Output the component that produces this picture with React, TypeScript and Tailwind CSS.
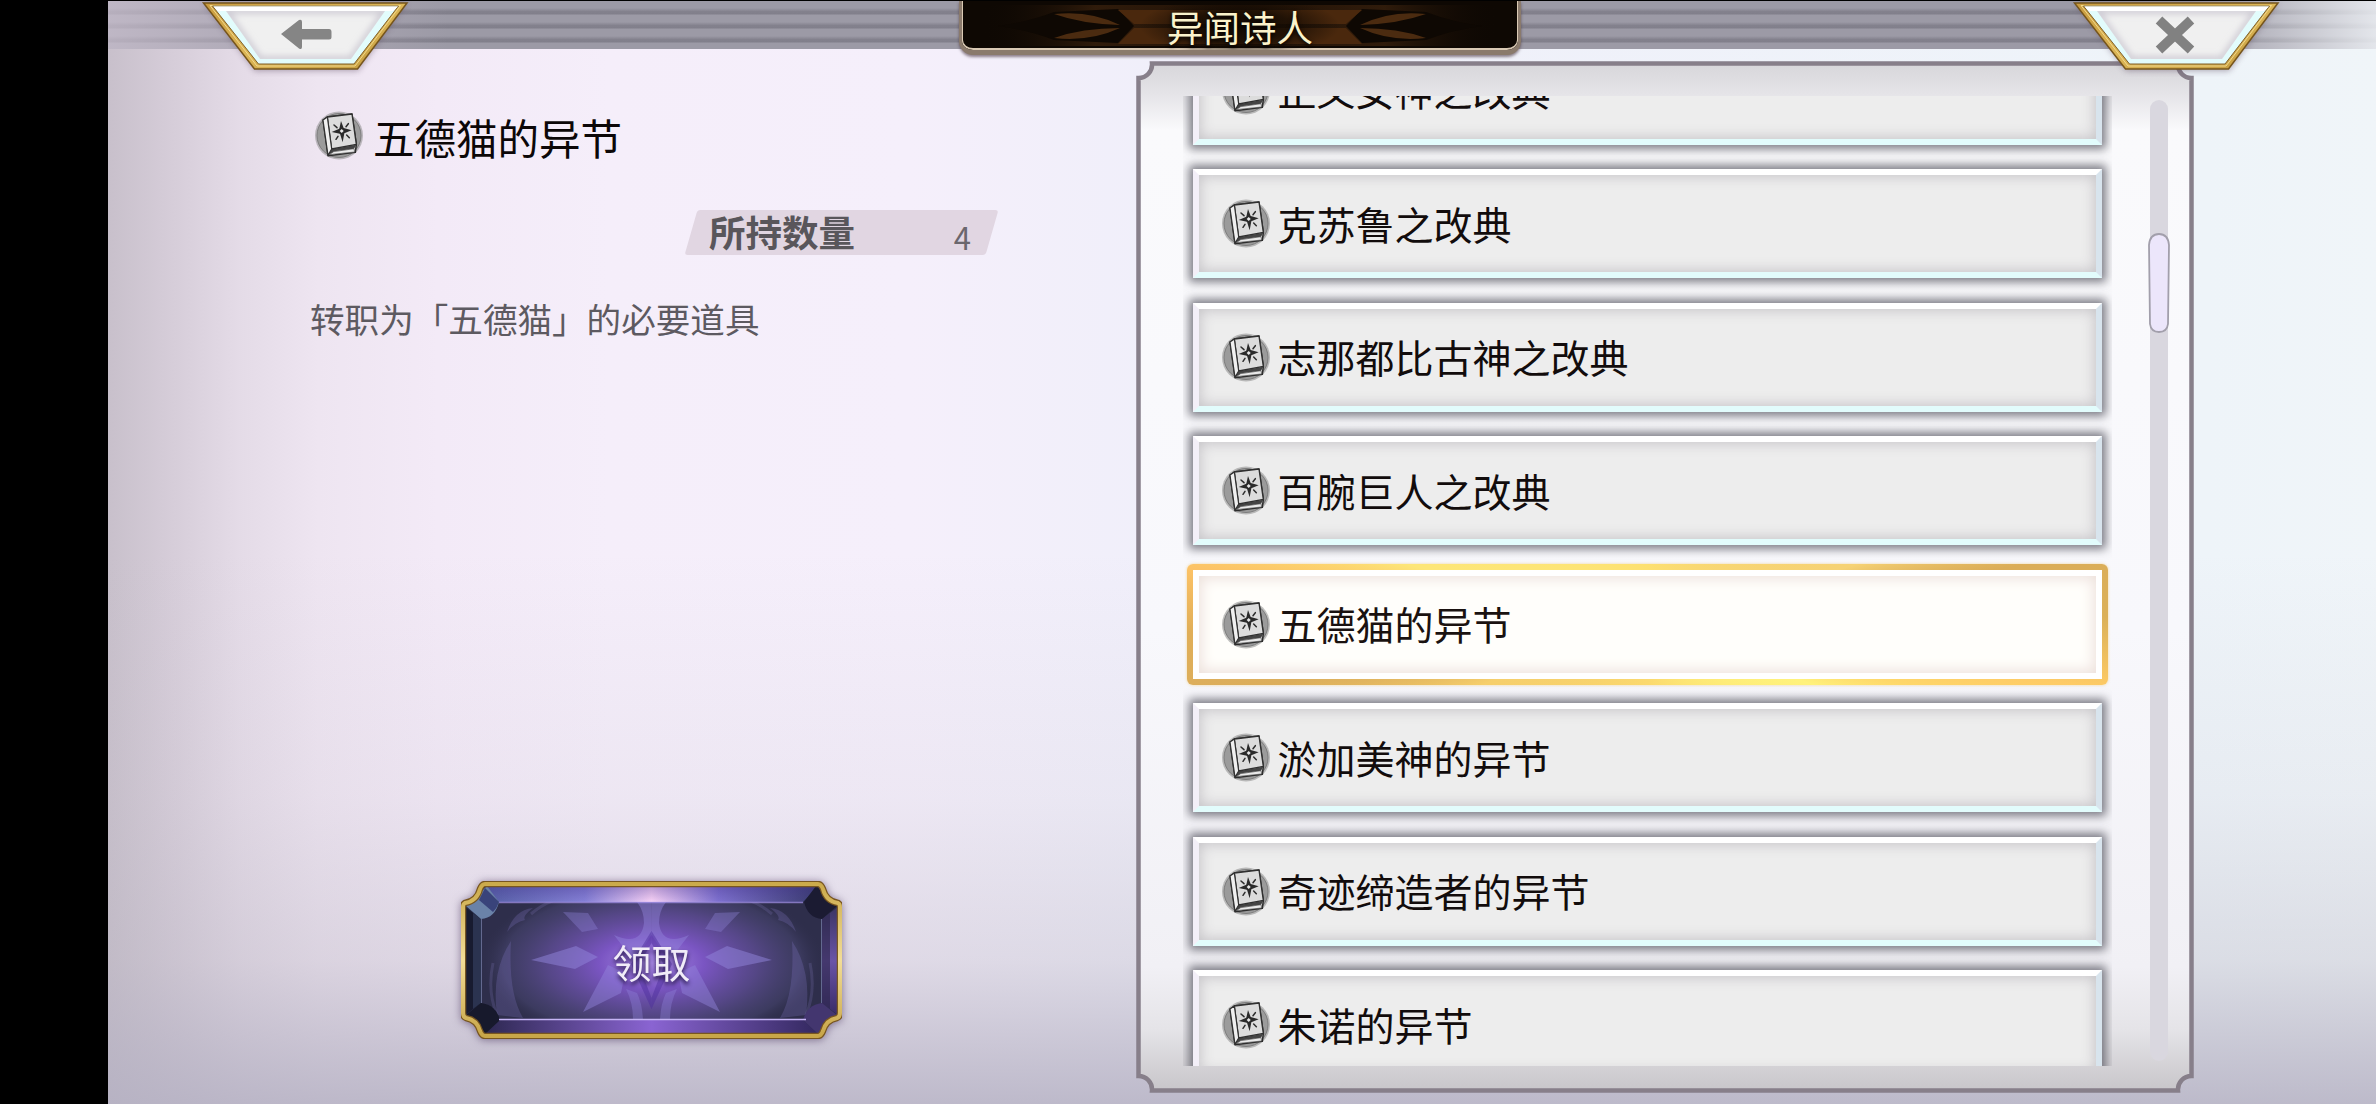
import React from 'react';

interface Item {
  id: number;
  name: string;
}

const ITEMS: Item[] = [
  { id: 1, name: '正义女神之改典' },
  { id: 2, name: '克苏鲁之改典' },
  { id: 3, name: '志那都比古神之改典' },
  { id: 4, name: '百腕巨人之改典' },
  { id: 5, name: '五德猫的异节' },
  { id: 6, name: '淤加美神的异节' },
  { id: 7, name: '奇迹缔造者的异节' },
  { id: 8, name: '朱诺的异节' },
];

const SELECTED_ID = 5;

const BookIcon: React.FC = () => (
  <svg viewBox="0 0 144 147" className="h-[49px] w-12 shrink-0">
    <circle cx="72" cy="73.500" r="72" fill="#8d8d8d" opacity="0.55" />
    <circle cx="72" cy="73.500" r="66" fill="#9b9b9b" stroke="#7d7d7d" strokeWidth="3" />
    {/* spine and pages */}
    <path d="M24 27 L37 18 L111 9 L124 100 L121 124 L39 134 Z" fill="#e6e6e6" stroke="#2c2c2c" strokeWidth="4.500" strokeLinejoin="round" />
    <path d="M39 133 L50 115 L124 101 L117 113 L58 121 Z" fill="#444" />
    <path d="M43 131 L56 122 L117 113 L119 123 Z" fill="#e9e9e9" stroke="#444" strokeWidth="2" />
    {/* cover */}
    <path d="M37 18 L111 9 L124 100 L50 114 Z" fill="#dcdcdc" stroke="#303030" strokeWidth="4" strokeLinejoin="round" />
    <path d="M24 27 L37 18 L50 114 L39 133 Z" fill="#f0f0f0" stroke="#303030" strokeWidth="3.500" strokeLinejoin="round" />
    {/* star */}
    <path d="M78 30 L86 51 L110 58 L88 67 L83 94 L75 68 L50 63 L73 53 Z" fill="#2a2a2a" />
    <circle cx="80" cy="60" r="9" fill="#2a2a2a" />
    <path d="M80 54 L86 60 L80 66 L74 60 Z" fill="#e8e8e8" />
    <path d="M57 42 L66 50 M100 38 L93 47 M63 85 L69 76 M103 80 L95 72" stroke="#2d2d2d" strokeWidth="4.500" strokeLinecap="round" />
  </svg>
);

const CornerButton: React.FC<{ id: string; label: string; children: React.ReactNode }> = ({ id, label, children }) => (
  <button aria-label={label} className="h-[76px] w-[216px] shrink-0">
    <svg viewBox="0 0 216 76" className="block h-full w-full">
      <defs>
        <linearGradient id={`${id}-gold`} x1="0" y1="0" x2="1" y2="1">
          <stop offset="0" stopColor="#c99b3e" />
          <stop offset="0.500" stopColor="#dcb656" />
          <stop offset="1" stopColor="#c39a3c" />
        </linearGradient>
        <filter id={`${id}-blur`} x="-20%" y="-20%" width="140%" height="140%">
          <feGaussianBlur stdDeviation="3" />
        </filter>
        <clipPath id={`${id}-face`}>
          <path d="M28 10 H187 L153 58 H62 Z" />
        </clipPath>
      </defs>
      <path d="M6 2 H209 L160 70 H57 Z" fill="#5c4a60" opacity="0.450" filter={`url(#${id}-blur)`} />
      <path d="M5.500 2 H209 L159.500 68 H56.500 Z" fill={`url(#${id}-gold)`} stroke="#76551c" strokeWidth="1.500" />
      <path d="M12 4.500 H202.500 L157 65 H59 Z" fill="none" stroke="#f1d98c" strokeWidth="1" />
      <path d="M14.500 5 H200.500 L156 63 H60.500 Z" fill="#e2fcfc" stroke="#80602a" strokeWidth="1" />
      <path d="M15.500 5.500 H200 L195 10 H20 Z" fill="#fff" />
      <path d="M28 10 H187 L153 58 H62 Z" fill="#f0f0f0" />
      <g clipPath={`url(#${id}-face)`}>
        <path d="M28 10 H187 L153 58 H62 Z" fill="none" stroke="#c9c6d0" strokeWidth="5" filter={`url(#${id}-blur)`} />
      </g>
      {children}
    </svg>
  </button>
);

const TitlePlate: React.FC = () => (
  <div className="grid h-[54px] w-[562px] shrink-0 place-items-center overflow-hidden rounded-b-[14px] border-x-[3px] border-b-[5px] border-[#8a7a6c] bg-[#0e0803] shadow-[0_2px_3px_rgba(70,50,60,0.6),inset_0_-1px_0_1px_#d9c9b4]">
    <svg viewBox="0 0 556 49" preserveAspectRatio="none" className="col-start-1 row-start-1 h-full w-full">
      <defs>
        <linearGradient id="plate" x1="0" x2="1" y1="0" y2="0">
          <stop offset="0" stopColor="#0e0803" stopOpacity="0" />
          <stop offset="0.220" stopColor="#42260f" />
          <stop offset="0.500" stopColor="#2b1708" />
          <stop offset="0.780" stopColor="#42260f" />
          <stop offset="1" stopColor="#0e0803" stopOpacity="0" />
        </linearGradient>
        <radialGradient id="plateCore">
          <stop offset="0" stopColor="#120a03" />
          <stop offset="0.500" stopColor="#120a03" stopOpacity="0.750" />
          <stop offset="1" stopColor="#120a03" stopOpacity="0" />
        </radialGradient>
      </defs>
      <rect x="20" y="4" width="516" height="41" fill="url(#plate)" opacity="0.650" />
      {['', 'translate(556 0) scale(-1 1)'].map((t) => (
        <g key={t} transform={t}>
          <path d="M36 25 Q66 21 92 11 L156 8 L172 25 L156 42 L92 39 Q66 29 36 25 Z" fill="#0e0803" />
          <path d="M92 13 Q128 9 158 24 Q120 23 92 13 Z M92 37 Q128 41 158 27 Q120 27 92 37 Z" fill="#4b2b10" />
          <path d="M156 9 H278 V23 H172 Z M172 27 H278 V43 H156 Z" fill="#4a280d" />
        </g>
      ))}
      <ellipse cx="278" cy="25" rx="100" ry="30" fill="url(#plateCore)" />
    </svg>
    <h1 className="col-start-1 row-start-1 pt-0.5 text-[36.500px] leading-[44px] text-[#fbf3cb] [text-shadow:0_2px_4px_#000]">异闻诗人</h1>
  </div>
);

const ReceiveButton: React.FC = () => (
  <button className="grid h-[158px] w-[381px] place-items-center drop-shadow-[0_1px_4px_rgba(70,50,90,0.6)]">
    <svg viewBox="0 0 381 158" className="col-start-1 row-start-1 h-full w-full">
      <defs>
        <radialGradient id="glow" cx="0.500" cy="0.500" r="0.500">
          <stop offset="0" stopColor="#a98ae6" />
          <stop offset="0.300" stopColor="#7a55c2" />
          <stop offset="0.600" stopColor="#5f4d96" stopOpacity="0.800" />
          <stop offset="0.850" stopColor="#4d4a78" stopOpacity="0.450" />
          <stop offset="1" stopColor="#2b2a45" stopOpacity="0" />
        </radialGradient>
        <linearGradient id="topEdge" x1="0" x2="1" y1="0" y2="0">
          <stop offset="0" stopColor="#5660a6" />
          <stop offset="0.300" stopColor="#8580d6" />
          <stop offset="0.500" stopColor="#f8d2f6" />
          <stop offset="0.700" stopColor="#7e71cf" />
          <stop offset="1" stopColor="#3a3c70" />
        </linearGradient>
        <linearGradient id="topShade" x1="0" x2="0" y1="0" y2="1">
          <stop offset="0" stopColor="#3d2b86" stopOpacity="0.350" />
          <stop offset="1" stopColor="#3d2b86" stopOpacity="0" />
        </linearGradient>
        <linearGradient id="bottomEdge" x1="0" x2="1" y1="0" y2="0">
          <stop offset="0" stopColor="#2d2851" />
          <stop offset="0.500" stopColor="#8a64d2" />
          <stop offset="1" stopColor="#33285f" />
        </linearGradient>
        <linearGradient id="rightEdge" x1="0" x2="0" y1="0" y2="1">
          <stop offset="0" stopColor="#3a3564" />
          <stop offset="0.500" stopColor="#6a54a8" />
          <stop offset="1" stopColor="#382b67" />
        </linearGradient>
        <linearGradient id="rim" x1="0" x2="0" y1="0" y2="1">
          <stop offset="0" stopColor="#cbaa4b" />
          <stop offset="0.500" stopColor="#f2dd97" />
          <stop offset="1" stopColor="#c8a648" />
        </linearGradient>
        <clipPath id="btnBody">
          <path d="M24 3 H357 Q360 3 362 8 Q365 20 377 22 Q379 23 379 26 V132 Q379 136 376 137 Q365 139 362 150 Q360 155 357 155 H24 Q21 155 19 150 Q16 139 5 137 Q2 136 2 132 V26 Q2 23 4 22 Q16 20 19 8 Q21 3 24 3 Z" />
        </clipPath>
      </defs>
      <g clipPath="url(#btnBody)">
        <rect width="381" height="158" fill="#292c48" />
        <rect x="20" y="21" width="341" height="117" fill="#2e2e4b" />
        <ellipse cx="190.500" cy="82" rx="175" ry="86" fill="url(#glow)" />
        {['', 'translate(381 0) scale(-1 1)'].map((t) => (
          <g key={t} transform={t} fill="#9286dc">
            <path d="M70 79 L115 65 L137 76 L114 88 Z" opacity="0.500" />
            <path d="M102 31 L127 32 L137 48 L121 51 Z" opacity="0.350" />
            <path d="M147 84 L122 131 L160 112 L164 92 Z" opacity="0.450" />
            <path d="M153 54 Q180 66 183 42 Q183 30 176 21 H190.500 V54 L173 80 Z" opacity="0.450" />
            <path d="M165 108 Q172 122 172 138 H182 Q181 122 176 112 Z" opacity="0.350" />
            <path d="M190.500 50 L170 83 L190.500 128 V117 L178 84 L190.500 62 Z" fill="#4c2c9b" opacity="0.450" />
            <path d="M50 60 Q30 90 36 134 L62 137 Q47 112 50 60 Z" opacity="0.220" />
            <path d="M46 51 Q53 29 72 27 Q61 35 64 39 Q54 41 46 51 Z" opacity="0.220" />
            <path d="M32 82 Q26 110 36 134 M70 33 Q92 14 120 16" fill="none" stroke="#8b84ca" strokeWidth="3" opacity="0.200" />
          </g>
        ))}
        {/* bevelled sides */}
        <path d="M24 5 H357 L342 21 H38 Z" fill="url(#topEdge)" />
        <path d="M24 5 H357 L342 21 H38 Z" fill="url(#topShade)" />
        <path d="M39 139 H342 L357 153 H24 Z" fill="url(#bottomEdge)" />
        <path d="M4 26 L20 38 V122 L4 134 Z" fill="#181b30" />
        <path d="M12 32 L20 38 V122 L12 128 Z" fill="#2b3350" />
        <path d="M377 26 L361 38 V122 L377 134 Z" fill="url(#rightEdge)" />
        <path d="M369 32 L361 38 V122 L369 128 Z" fill="#2c2647" opacity="0.600" />
        <path d="M5 25 L26 5 L38 21 Q34 37 20 38 Z" fill="#6a82a8" />
        <path d="M24 7 L38 21 Q36 27 32 31 L18 19 Z" fill="#39437a" />
        <path d="M376 25 L355 5 L343 21 Q347 37 361 38 Z" fill="#1b1b32" />
        <path d="M5 134 L24 153 L39 139 Q35 124 20 122 Z" fill="#17192c" />
        <path d="M376 134 L357 153 L342 139 Q346 124 361 122 Z" fill="#43366f" />
        <path d="M38 21.500 H342" stroke="#a996ef" strokeWidth="1.500" opacity="0.700" />
        <path d="M38 138.500 H345" stroke="#c5b5f5" strokeWidth="1.500" />
        <path d="M20.500 38 V122 M360.500 38 V122" stroke="#8791bd" strokeWidth="1" opacity="0.600" />
      </g>
      <path d="M24 3 H357 Q360 3 362 8 Q365 20 377 22 Q379 23 379 26 V132 Q379 136 376 137 Q365 139 362 150 Q360 155 357 155 H24 Q21 155 19 150 Q16 139 5 137 Q2 136 2 132 V26 Q2 23 4 22 Q16 20 19 8 Q21 3 24 3 Z" fill="none" stroke="#785620" strokeWidth="6.500" />
      <path d="M24 3 H357 Q360 3 362 8 Q365 20 377 22 Q379 23 379 26 V132 Q379 136 376 137 Q365 139 362 150 Q360 155 357 155 H24 Q21 155 19 150 Q16 139 5 137 Q2 136 2 132 V26 Q2 23 4 22 Q16 20 19 8 Q21 3 24 3 Z" fill="none" stroke="url(#rim)" strokeWidth="4" />
    </svg>
    <span className="col-start-1 row-start-1 pt-0.5 text-[39px] leading-[48px] text-[#f1ecf8] [text-shadow:0_3px_4px_#20133f]">领取</span>
  </button>
);

const ItemRow: React.FC<{ item: Item; selected: boolean }> = ({ item, selected }) => {
  if (selected) {
    return (
      <li className="-m-1.5 h-[121px] shrink-0 rounded-[6px] bg-[conic-gradient(#fde070_0deg,#f6d274_74deg,#dbad58_81deg,#dbb058_89deg,#fecb66_98deg,#fed76a_103deg,#fff27c_110deg,#fbd96e_180deg,#f6cf6c_250deg,#dcae5c_261deg,#e0ae58_269deg,#fcc266_277deg,#fde678_284deg,#fde070_360deg)] p-1.5 shadow-[0_0_3px_rgba(240,200,110,0.7)]">
        <div className="flex h-[109px] items-center gap-2 border-6 border-white bg-[#fffefb] pl-[22.500px] shadow-[inset_0_0_14px_2px_#ecdfda]">
          <BookIcon />
          <span className="whitespace-nowrap pb-0.5 text-[39px] leading-[50px] text-[#1a1210]">{item.name}</span>
        </div>
      </li>
    );
  }

  return (
    <li className="flex h-[109px] shrink-0 items-center gap-2 border-6 border-t-white border-r-[#d8e4ed] border-b-[#e2fcfc] border-l-[#f3eff8] bg-[#ededed] pl-[22.500px] shadow-[0_0_9px_4px_rgba(82,82,92,0.75),inset_0_0_14px_1px_#c4c2c6]">
      <BookIcon />
      <span className="whitespace-nowrap pb-0.5 text-[39px] leading-[50px] text-[#120c0c]">{item.name}</span>
    </li>
  );
};

const ItemPanel: React.FC = () => (
  <section className="relative mt-3 flex h-[1032px] w-[1058px] shrink-0 pt-[35px] pl-[47px]">
    {/* frame with scooped corners */}
    <svg viewBox="0 0 1058 1032" className="absolute inset-0 h-full w-full">
      <defs>
        <linearGradient id="panelFill" x1="0" x2="0" y1="0" y2="1">
          <stop offset="0" stopColor="#d7d6da" />
          <stop offset="0.030" stopColor="#e5e4e8" />
          <stop offset="0.065" stopColor="#fafafc" />
          <stop offset="0.550" stopColor="#f8f8fc" />
          <stop offset="0.880" stopColor="#f1f0f5" />
          <stop offset="0.940" stopColor="#e5e4e8" />
          <stop offset="1" stopColor="#c8c6ca" />
        </linearGradient>
      </defs>
      <path
        d="M16 2.500 H1042 A13.500 13.500 0 0 0 1055.500 17 V1015 A13.500 13.500 0 0 0 1042 1029.500 H16 A13.500 13.500 0 0 0 2.500 1015 V17 A13.500 13.500 0 0 0 16 2.500 Z"
        fill="url(#panelFill)"
        stroke="#877f8a"
        strokeWidth="4.500"
      />
    </svg>
    <ul className="relative flex h-[970px] w-[929px] flex-col justify-end gap-[24.500px] overflow-hidden px-[10px]">
      {ITEMS.map((item) => (
        <ItemRow key={item.id} item={item} selected={item.id === SELECTED_ID} />
      ))}
      <li className="-mt-[37.500px] h-0 shrink-0" />
    </ul>
    {/* scrollbar */}
    <div className="relative mt-1 ml-[36px] flex h-[961px] w-[22px] justify-center">
      <div className="h-full w-[18px] rounded-full bg-[#d9d7df]" />
      <svg viewBox="0 0 22 100" className="absolute top-[133px] left-0 h-[100px] w-[22px]">
        <path d="M1 12 Q2 1 11 1 Q20 1 21 12 L20 91 Q19 99 11 99 Q3 99 2 91 Z" fill="#ece6fb" stroke="#a29fab" strokeWidth="1.800" />
      </svg>
    </div>
  </section>
);

const App: React.FC = () => {
  return (
    <div
      lang="zh-CN"
      className="h-[1104px] w-[2376px] overflow-hidden bg-black pt-px pl-[108px] font-['Noto_Sans_CJK_SC','Noto_Sans',sans-serif]"
    >
      <div className="flex h-[1103px] flex-col bg-[linear-gradient(180deg,rgba(180,176,190,0)_50%,rgba(180,176,190,0.12)_72%,rgba(180,176,190,0.34)_87%,rgba(180,176,194,0.85)_100%),linear-gradient(90deg,#c8c0cb_0px,#d5ccd8_60px,#e4dbe7_130px,#eee5f1_210px,#f3eaf7_330px,#f5eefa_500px,#f5effb_800px,#f0effa_1050px,#eef4f9_2100px,#f0f5f9_2268px)]">
        <header className="relative z-10 flex h-12 shrink-0 items-start bg-[linear-gradient(90deg,rgba(205,195,210,0.7)_0px,rgba(205,195,210,0)_340px,rgba(255,255,255,0)_2080px,rgba(240,243,247,0.85)_2268px),repeating-linear-gradient(180deg,#9c9aa6_0px,#9c9aa6_7px,#83818d_10.500px,#817f8b_13px,#9c9aa6_14px)] pl-[90px]">
          <CornerButton id="back" label="返回">
            <path d="M83 33 L101 19 Q104 18 104 21 V28 H131 Q133.500 28 133.500 31 V36 Q133.500 38.500 131 38.500 H104 V46 Q104 49 101 47.500 Z" fill="#858585" />
          </CornerButton>
          <div className="w-[545px] shrink-0" />
          <TitlePlate />
          <div className="w-[548px] shrink-0" />
          <CornerButton id="close" label="关闭">
            <path d="M90 19 L122 49 M122 19 L90 49" stroke="#818181" strokeWidth="9.500" />
          </CornerButton>
        </header>

        <main className="flex flex-1">
          <section className="flex w-[1028px] shrink-0 flex-col items-start pt-[62px] pl-[202px]">
            <div className="ml-[5px] flex h-[49px] items-center gap-[10px]">
              <BookIcon />
              <h2 className="pt-0.5 text-[41.500px] leading-[50px] text-[#0c0708]">五德猫的异节</h2>
            </div>

            <div className="mt-[50px] ml-[375px] grid h-[43px] w-[313px]">
              <div className="col-start-1 row-start-1 mx-[6px] -skew-x-[16deg] rounded-[3px] bg-[#e1d6e2]" />
              <div className="relative col-start-1 row-start-1 flex items-center justify-between pr-[27px] pl-[24px] text-[#59565b]">
                <span className="pb-0.5 text-[36.500px] leading-[43px] font-bold">所持数量</span>
                <span className="pt-[9px] text-[31px] leading-[36px] text-[#6b676d]">4</span>
              </div>
            </div>

            <p className="mt-[45px] text-[34.600px] leading-[40px] text-[#5d5a61]">转职为「五德猫」的必要道具</p>

            <div className="mt-[543px] ml-[151px]">
              <ReceiveButton />
            </div>
          </section>

          <ItemPanel />
        </main>
      </div>
    </div>
  );
};

export default App;
